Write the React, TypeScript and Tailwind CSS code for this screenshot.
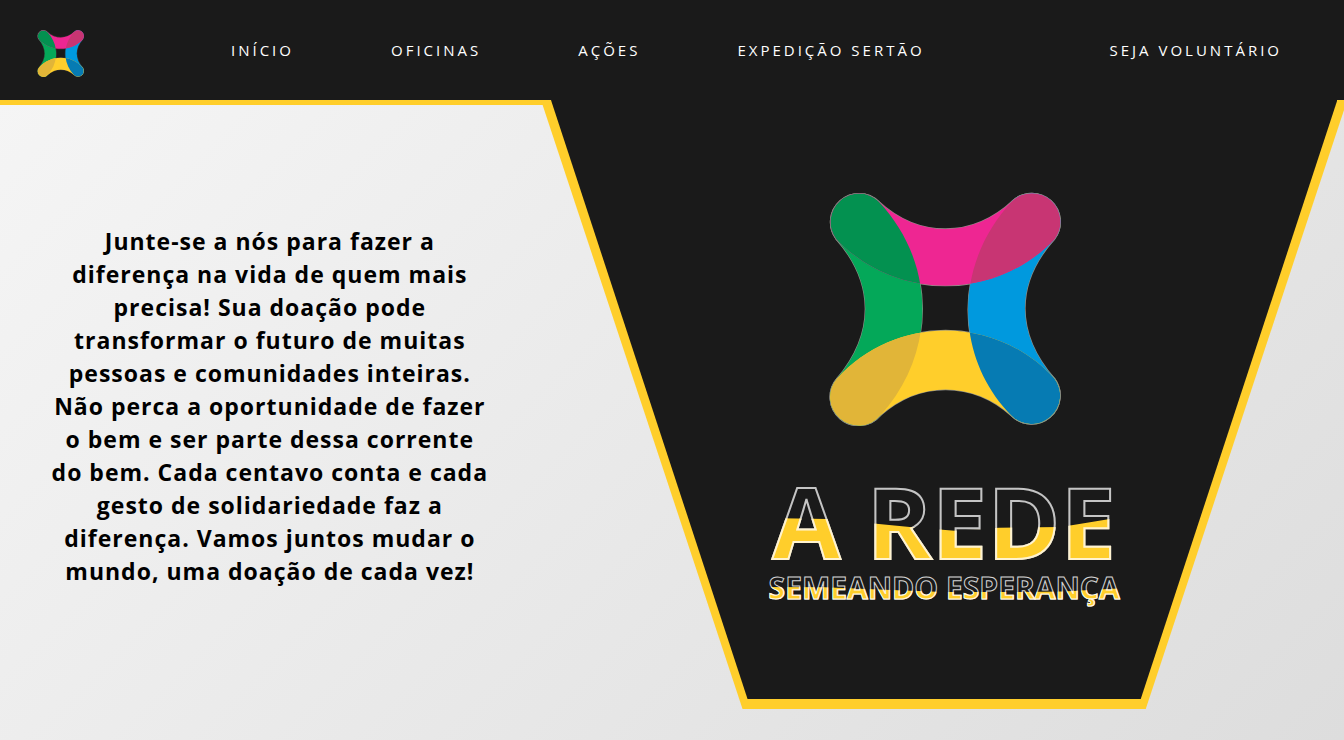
import { useId } from "react";

const GREEN =
  "M53 178 A85 85 0 0 1 180 66 C353 250 353 520 185 705 A85 85 0 0 1 56 594 C169 460 169 310 53 178 Z";
const PINK =
  "M180 66 C300 176 460 176 580 64 A85 85 0 0 1 705 178 C530 364 230 364 53 178 A85 85 0 0 1 180 66 Z";
const BLUE =
  "M580 64 C403 250 403 530 577 706 A85 85 0 0 0 705 595 C587 460 587 310 705 178 A85 85 0 0 0 580 64 Z";
const YELLOW =
  "M56 594 C230 403 530 403 705 595 A85 85 0 0 1 577 706 C460 601 300 601 185 705 A85 85 0 0 1 56 594 Z";

function Logo({ className }: { className: string }) {
  const id = useId();
  return (
    <svg viewBox="26 38 698 698" className={className} role="img" aria-label="A Rede">
      <defs>
        <clipPath id={`${id}-pink`}>
          <path d={PINK} />
        </clipPath>
        <clipPath id={`${id}-yellow`}>
          <path d={YELLOW} />
        </clipPath>
      </defs>
      <g stroke="#8d8d86" strokeWidth="4">
        <path d={GREEN} />
        <path d={PINK} />
        <path d={BLUE} />
        <path d={YELLOW} />
      </g>
      <path d={GREEN} fill="#04a859" />
      <path d={BLUE} fill="#0099de" />
      <path d={PINK} fill="#ee2692" />
      <path d={YELLOW} fill="#ffce2b" />
      <path d={GREEN} fill="#039150" clipPath={`url(#${id}-pink)`} />
      <path d={BLUE} fill="#c83573" clipPath={`url(#${id}-pink)`} />
      <path d={GREEN} fill="#e1b538" clipPath={`url(#${id}-yellow)`} />
      <path d={BLUE} fill="#067bb3" clipPath={`url(#${id}-yellow)`} />
    </svg>
  );
}

const links = [
  { label: "INÍCIO", href: "#inicio" },
  { label: "OFICINAS", href: "#oficinas" },
  { label: "AÇÕES", href: "#acoes" },
  { label: "EXPEDIÇÃO SERTÃO", href: "#expedicao" },
];

export default function App() {
  return (
    <div className="flex min-h-screen flex-col bg-[#1a1a1a] font-['Open_Sans','Noto_Sans',sans-serif]">
      <header className="flex h-[100px] items-center pr-[62px] pl-[37px] text-[15px] leading-5 tracking-[3px] text-white">
        <a href="#inicio" className="mt-1.5 mr-[147px]">
          <Logo className="size-[47px]" />
        </a>
        <nav className="flex flex-1 gap-[97px] whitespace-nowrap">
          {links.map((l) => (
            <a key={l.href} href={l.href}>
              {l.label}
            </a>
          ))}
          <a href="#voluntario" className="ml-auto">
            SEJA VOLUNTÁRIO
          </a>
        </nav>
      </header>

      <main className="flex flex-1 overflow-hidden bg-linear-135 from-[#f5f5f5] to-[#dddddd] pb-[31px]">
        <section className="flex w-[40.75%] shrink-0 items-center justify-center border-t-5 border-[#ffce2b] pr-13 pb-0.5 pl-11">
          <p className="text-center text-[23px] leading-[33px] font-bold tracking-[1px] text-black">
            Junte-se a nós para fazer a diferença na vida de quem mais precisa! Sua doação pode
            transformar o futuro de muitas pessoas e comunidades inteiras. Não perca a oportunidade
            de fazer o bem e ser parte dessa corrente do&nbsp;bem. Cada centavo conta e cada gesto
            de solidariedade faz a diferença. Vamos juntos mudar o mundo, uma doação de cada vez!
          </p>
        </section>

        <section className="-ml-[0.5%] flex w-[60%] shrink-0 bg-[#ffce2b] px-[10px] pb-[10px] [clip-path:polygon(0_0,100%_0,75%_100%,25%_100%)]">
          <div className="flex flex-1 flex-col items-center bg-[#1a1a1a] pt-[92px] [clip-path:polygon(0_0,100%_0,75%_100%,25%_100%)]">
            <Logo className="size-[234px]" />
            <h1
              data-text="A REDE"
              className="relative mt-[46px] text-[99px] leading-[98px] font-bold whitespace-nowrap text-transparent [-webkit-text-stroke:2px_#c4c4c4] before:absolute before:inset-0 before:text-[#ffce2b] before:content-[attr(data-text)] before:[-webkit-text-stroke:2px_#fff3d0] before:[clip-path:polygon(-2%_47%,16%_48%,31%_53%,40%_56%,53%_60%,66%_57%,84%_56%,100%_47%,102%_100%,-2%_100%)]"
            >
              A REDE
            </h1>
            <h2
              data-text="SEMEANDO ESPERANÇA"
              className="relative text-[30px] leading-9 font-bold whitespace-nowrap text-transparent [-webkit-text-stroke:1px_#d4d4d4] before:absolute before:inset-0 before:text-[#ffce2b] before:content-[attr(data-text)] before:[-webkit-text-stroke:1px_#fff8e4] before:[clip-path:polygon(-2%_47%,16%_48%,33%_55%,50%_61%,70%_61%,84%_60%,102%_50%,102%_120%,-2%_120%)]"
            >
              SEMEANDO ESPERANÇA
            </h2>
          </div>
        </section>
      </main>
    </div>
  );
}
